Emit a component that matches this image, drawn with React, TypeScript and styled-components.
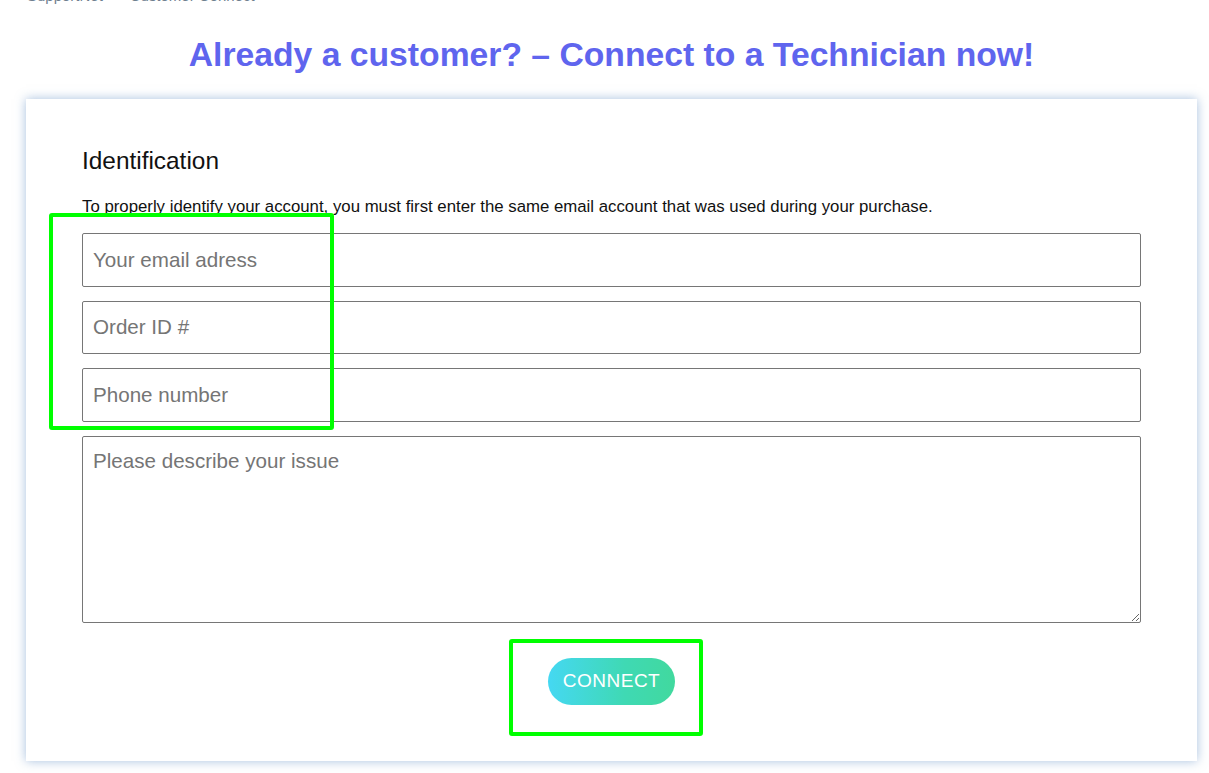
import React from 'react'
import styled, {createGlobalStyle} from 'styled-components'

const GlobalStyle = createGlobalStyle`
  html, body {
    margin: 0;
    padding: 0;
    background: #ffffff;
    font-family: "Liberation Sans", Arial, sans-serif;
  }
  * {
    box-sizing: border-box;
  }
`

const Page = styled.div`
  position: relative;
  padding: 0 12px 12px 26px;
  overflow: hidden;
`

const Breadcrumb = styled.div`
  margin-top: -13px;
  padding-left: 1px;
  height: 18px;
  line-height: 18px;
  font-size: 15px;
  color: #6f7f8f;
`

const Crumb = styled.span``

const Sep = styled.span`
  margin: 0 9px;
`

const Title = styled.h1`
  margin: 30px 0 0;
  text-align: center;
  font-size: 33.7px;
  line-height: 38px;
  font-weight: 700;
  color: #5f65ee;
`

const Card = styled.div`
  margin-top: 26px;
  background: #ffffff;
  padding: 48px 56px 56px;
  box-shadow: 0 0 10px rgba(80, 130, 190, 0.5);
`

const Heading = styled.h2`
  margin: 0;
  font-size: 24.4px;
  line-height: 28px;
  font-weight: 400;
  color: #111;
`

const Intro = styled.p`
  margin: 23px 0 17px;
  font-size: 16.8px;
  line-height: 18px;
  color: #111;
`

const Form = styled.form`
  display: flex;
  flex-direction: column;
  gap: 14px;
`

const Field = styled.input`
  display: block;
  width: 100%;
  height: 53.5px;
  padding: 0 10px;
  border: 1px solid #767676;
  border-radius: 2px;
  font-family: "Liberation Sans", Arial, sans-serif;
  font-size: 20.6px;
  color: #222;
  &::placeholder {
    color: #757575;
  }
`

const Area = styled.textarea`
  display: block;
  width: 100%;
  height: 187px;
  padding: 12px 10px;
  border: 1px solid #767676;
  border-radius: 2px;
  font-family: "Liberation Sans", Arial, sans-serif;
  font-size: 20.6px;
  color: #222;
  &::placeholder {
    color: #757575;
  }
`

const Actions = styled.div`
  display: flex;
  justify-content: center;
  padding-top: 35px;
`

const ConnectButton = styled.button`
  height: 47px;
  padding: 0 15px;
  border: none;
  border-radius: 24px;
  background: linear-gradient(90deg, #45d8f2 0%, #3fd9b4 60%, #41d99e 100%);
  color: #fff;
  font-family: "Liberation Sans", Arial, sans-serif;
  font-size: 19px;
  letter-spacing: 0.5px;
  cursor: pointer;
`

const Highlight = styled.div<{$x: number; $y: number; $w: number; $h: number}>`
  position: absolute;
  left: ${p => p.$x}px;
  top: ${p => p.$y}px;
  width: ${p => p.$w}px;
  height: ${p => p.$h}px;
  border: 4px solid #00ff00;
  border-radius: 3px;
  pointer-events: none;
`

export default function App() {
  return (
    <Page>
      <GlobalStyle />
      <Breadcrumb>
        <Crumb>SupportNet</Crumb>
        <Sep>&gt;</Sep>
        <Crumb>Customer Connect</Crumb>
      </Breadcrumb>
      <Title>Already a customer? – Connect to a Technician now!</Title>
      <Card>
        <Heading>Identification</Heading>
        <Intro>
          To properly identify your account, you must first enter the same email account that was used
          during your purchase.
        </Intro>
        <Form onSubmit={e => e.preventDefault()}>
          <Field type="email" placeholder="Your email adress" />
          <Field type="text" placeholder="Order ID #" />
          <Field type="tel" placeholder="Phone number" />
          <Area placeholder="Please describe your issue" />
        </Form>
        <Actions>
          <ConnectButton type="button">CONNECT</ConnectButton>
        </Actions>
      </Card>
      <Highlight $x={49} $y={213} $w={285} $h={217} />
      <Highlight $x={509} $y={639} $w={194} $h={97} />
    </Page>
  )
}
